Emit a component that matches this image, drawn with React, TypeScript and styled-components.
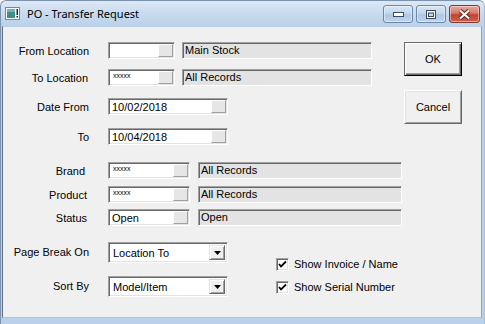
import React from "react";
import styled, { createGlobalStyle } from "styled-components";

const GlobalStyle = createGlobalStyle`
  html, body { margin: 0; padding: 0; }
  body { width: 485px; height: 324px; overflow: hidden; background: #fff; }
`;

const Frame = styled.div`
  width: 485px;
  height: 324px;
  box-sizing: border-box;
  display: flex;
  flex-direction: column;
  background: linear-gradient(#dde8f5 0, #c6d9ee 14px, #b9d1ea 26px, #b9d1ea);
  border: 1px solid #7d93ad;
  border-bottom: none;
  border-right-color: #a4bedd;
  border-radius: 6px 6px 0 0;
  padding: 0 2px 6px 1px;
  font-family: "Liberation Sans", Arial, sans-serif;
  font-size: 11px;
  color: #000;
`;

const TitleBar = styled.div`
  height: 25px;
  display: flex;
  align-items: flex-start;
  padding-left: 3px;
  padding-right: 2px;
`;

const AppIcon = styled.svg`
  margin-top: 6px;
  flex: none;
`;

const Caption = styled.div`
  flex: 1;
  margin-left: 7px;
  margin-top: 4px;
  font-family: "Noto Sans", "Open Sans", sans-serif;
  font-size: 11px;
  line-height: 17px;
  color: #000;
`;

const CaptionButtons = styled.div`
  display: flex;
  gap: 3px;
  margin-top: 4px;
`;

const CaptionBtn = styled.div<{ $close?: boolean; $w: number }>`
  width: ${(p) => p.$w}px;
  height: 18px;
  box-sizing: border-box;
  border: 1px solid ${(p) => (p.$close ? "#7b3a33" : "#6c86a8")};
  border-radius: 3px;
  display: flex;
  align-items: center;
  justify-content: center;
  background: ${(p) =>
    p.$close
      ? "linear-gradient(#e9a99b 0, #d7796a 45%, #c2412f 55%, #d0624c 100%)"
      : "linear-gradient(#d9e6f4 0, #c3d6ec 45%, #aec7e4 55%, #c0d5ed 100%)"};
  box-shadow: inset 0 0 0 1px rgba(255, 255, 255, 0.45);
`;

const Client = styled.div`
  flex: 1;
  display: flex;
  background: #f0f0f0;
  border-top: 1px solid #b9cde5;
  border-left: 1px solid #5f7086;
  border-right: 1px solid #83a7d2;
  border-bottom: 1px solid #a8c4e4;
`;

const Form = styled.div`
  flex: 1;
  display: flex;
  flex-direction: column;
`;

const Row = styled.div<{ $mt: number; $top?: boolean }>`
  display: flex;
  align-items: ${(p) => (p.$top ? "flex-start" : "center")};
  margin-top: ${(p) => p.$mt}px;
`;

const Label = styled.div<{ $pr?: number; $lh?: number }>`
  width: 105px;
  flex: none;
  box-sizing: border-box;
  text-align: right;
  padding-right: ${(p) => p.$pr ?? 19}px;
  line-height: ${(p) => p.$lh ?? 14}px;
  white-space: nowrap;
`;

const sunken = `
  box-sizing: border-box;
  border: 1px solid;
  border-color: #a0a0a0 #ffffff #ffffff #a0a0a0;
  box-shadow: inset 1px 1px 0 #696969, inset -1px -1px 0 #e3e3e3;
`;

const CodeBox = styled.div<{ $w: number }>`
  ${sunken}
  width: ${(p) => p.$w}px;
  height: 17px;
  background: #fff;
  display: flex;
  align-items: stretch;
  padding: 1px;
`;

const CodeText = styled.div<{ $small?: boolean }>`
  flex: 1;
  padding-left: ${(p) => (p.$small ? 3 : 2)}px;
  font-size: ${(p) => (p.$small ? "7px" : "11px")};
  line-height: ${(p) => (p.$small ? "9px" : "14px")};
  white-space: nowrap;
  overflow: hidden;
`;

const LookupBtn = styled.div`
  width: 15px;
  flex: none;
  box-sizing: border-box;
  background: #e6e6e6;
  border-top: 1px solid #fff;
  border-left: 1px solid #fff;
  border-right: 1px solid #a0a0a0;
  border-bottom: 1px solid #a0a0a0;
`;

const DescBox = styled.div<{ $w: number; $ml: number }>`
  ${sunken}
  width: ${(p) => p.$w}px;
  height: 17px;
  margin-left: ${(p) => p.$ml}px;
  background: #e3e3e3;
  padding-left: 2px;
  line-height: 15px;
  white-space: nowrap;
`;

const Combo = styled.div`
  ${sunken}
  width: 120px;
  height: 21px;
  flex: none;
  background: #fff;
  display: flex;
  padding: 2px;
`;

const ComboText = styled.div`
  flex: 1;
  padding-left: 2px;
  line-height: 16px;
`;

const ComboArrow = styled.div`
  width: 16px;
  flex: none;
  box-sizing: border-box;
  background: #f0f0f0;
  border: 1px solid;
  border-color: #e3e3e3 #696969 #696969 #e3e3e3;
  box-shadow: inset 1px 1px 0 #fff, inset -1px -1px 0 #a0a0a0;
  display: flex;
  align-items: center;
  justify-content: center;
`;

const Check = styled.label<{ $mt: number }>`
  display: flex;
  align-items: center;
  margin-left: 48px;
  margin-top: ${(p) => p.$mt}px;
  line-height: 15px;
  white-space: nowrap;
`;

const CheckBox = styled.span`
  ${sunken}
  width: 13px;
  height: 13px;
  background: #fff;
  display: flex;
  align-items: center;
  justify-content: center;
  margin-right: 5px;
`;

const ButtonCol = styled.div`
  display: flex;
  flex-direction: column;
  gap: 14px;
  padding: 15px 19px 0 0;
`;

const DlgButton = styled.div<{ $default?: boolean }>`
  width: 58px;
  height: 34px;
  box-sizing: border-box;
  background: #f0f0f0;
  display: flex;
  align-items: center;
  justify-content: center;
  border: 1px solid;
  border-color: ${(p) =>
    p.$default ? "#6a6a6a #000 #000 #6a6a6a" : "#fff #696969 #696969 #fff"};
  box-shadow: ${(p) =>
    p.$default
      ? "inset 1px 1px 0 #fff, inset -1px -1px 0 #696969, inset -2px -2px 0 #a0a0a0"
      : "inset 1px 1px 0 #e3e3e3, inset -1px -1px 0 #a0a0a0"};
`;

const CheckMark = () => (
  <svg width="9" height="9" viewBox="0 0 9 9">
    <path d="M1 4 L3 6.5 L8 1.5" fill="none" stroke="#000" strokeWidth="1.8" />
  </svg>
);

const Arrow = () => (
  <svg width="7" height="4" viewBox="0 0 7 4">
    <path d="M0 0 H7 L3.5 4 Z" fill="#000" />
  </svg>
);

type CodeRowProps = {
  label: string;
  code?: string;
  small?: boolean;
  desc: string;
  codeW: number;
  descW: number;
  gap: number;
  mt: number;
  pr?: number;
};

const CodeRow = ({ label, code, small, desc, codeW, descW, gap, mt, pr }: CodeRowProps) => (
  <Row $mt={mt}>
    <Label $pr={pr}>{label}</Label>
    <CodeBox $w={codeW}>
      <CodeText $small={small}>{code}</CodeText>
      <LookupBtn />
    </CodeBox>
    <DescBox $w={descW} $ml={gap}>
      {desc}
    </DescBox>
  </Row>
);

const DateRow = ({ label, value, mt }: { label: string; value: string; mt: number }) => (
  <Row $mt={mt}>
    <Label>{label}</Label>
    <CodeBox $w={120}>
      <CodeText>{value}</CodeText>
      <LookupBtn />
    </CodeBox>
  </Row>
);

const ComboRow = ({
  label,
  value,
  check,
  checkMt,
  mt,
}: {
  label: string;
  value: string;
  check: string;
  checkMt: number;
  mt: number;
}) => (
  <Row $mt={mt} $top>
    <Label $lh={21}>{label}</Label>
    <Combo>
      <ComboText>{value}</ComboText>
      <ComboArrow>
        <Arrow />
      </ComboArrow>
    </Combo>
    <Check $mt={checkMt}>
      <CheckBox>
        <CheckMark />
      </CheckBox>
      {check}
    </Check>
  </Row>
);

export default function App() {
  return (
    <>
      <GlobalStyle />
      <Frame>
        <TitleBar>
          <AppIcon width="15" height="13" viewBox="0 0 15 13">
            <rect x="0.5" y="0.5" width="14" height="12" fill="#f4f6f8" stroke="#7a8796" />
            <rect x="2" y="2" width="8" height="9" fill="#3f8f86" />
            <rect x="2" y="2" width="8" height="3" fill="#6fb3c0" />
            <rect x="11.5" y="2" width="1.5" height="6" fill="#1d2a3a" />
            <rect x="11.5" y="9" width="1.5" height="1.5" fill="#1d2a3a" />
          </AppIcon>
          <Caption>PO - Transfer Request</Caption>
          <CaptionButtons>
            <CaptionBtn $w={30}>
              <svg width="11" height="5" viewBox="0 0 11 5">
                <rect x="0.5" y="0.5" width="10" height="4" fill="#fff" stroke="#3b4a5e" />
              </svg>
            </CaptionBtn>
            <CaptionBtn $w={30}>
              <svg width="10" height="9" viewBox="0 0 10 9">
                <rect x="0.5" y="0.5" width="9" height="8" fill="#fff" stroke="#3b4a5e" />
                <rect x="2.5" y="3" width="5" height="3.5" fill="#c9d9ec" stroke="#3b4a5e" />
              </svg>
            </CaptionBtn>
            <CaptionBtn $w={31} $close>
              <svg width="13" height="11" viewBox="0 0 13 11">
                <path d="M2 1.5 L11 9.5 M11 1.5 L2 9.5" stroke="#5a2019" strokeWidth="4" />
                <path d="M2 1.5 L11 9.5 M11 1.5 L2 9.5" stroke="#fff" strokeWidth="2.2" />
              </svg>
            </CaptionBtn>
          </CaptionButtons>
        </TitleBar>
        <Client>
          <Form>
            <CodeRow label="From Location" desc="Main Stock" codeW={67} descW={190} gap={7} mt={15} />
            <CodeRow label="To Location" code="xxxxx" small desc="All Records" codeW={67} descW={190} gap={7} mt={10} pr={20} />
            <DateRow label="Date From" value="10/02/2018" mt={12} />
            <DateRow label="To" value="10/04/2018" mt={13} />
            <CodeRow label="Brand" code="xxxxx" small desc="All Records" codeW={82} descW={204} gap={8} mt={17} pr={23} />
            <CodeRow label="Product" code="xxxxx" small desc="All Records" codeW={82} descW={204} gap={8} mt={7} pr={21} />
            <CodeRow label="Status" code="Open" desc="Open" codeW={82} descW={204} gap={8} mt={6} pr={21} />
            <ComboRow label="Page Break On" value="Location To" check="Show Invoice / Name" checkMt={15} mt={16} />
            <ComboRow label="Sort By" value="Model/Item" check="Show Serial Number" checkMt={4} mt={4} />
          </Form>
          <ButtonCol>
            <DlgButton $default>OK</DlgButton>
            <DlgButton>Cancel</DlgButton>
          </ButtonCol>
        </Client>
      </Frame>
    </>
  );
}
